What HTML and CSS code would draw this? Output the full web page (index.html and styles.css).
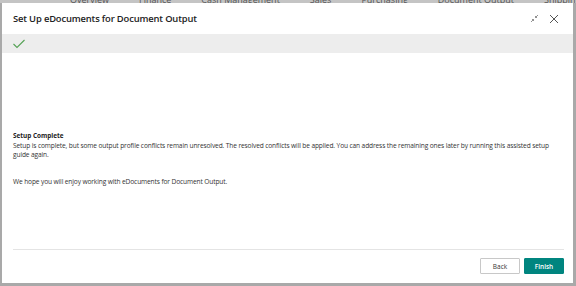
FILE: index.html
```html
<!DOCTYPE html>
<html>
<head>
<meta charset="utf-8">
<link rel="stylesheet" href="styles.css">
</head>
<body>
<div class="backdrop">
  <div class="tabs"><span>Overview</span><span>Finance</span><span>Cash Management</span><span>Sales</span><span>Purchasing</span><span>Document Output</span><span>Shipping</span><span>All reports</span></div>
</div>
<div class="dialog">
  <div class="header">
    <h1 class="title">Set Up eDocuments for Document Output</h1>
    <div class="actions">
      <svg class="icon" width="9" height="9" viewBox="0 0 9 9"><path d="M1 8L3.5 5.5M2 5.5h1.5V7M8 1L5.5 3.5M7 3.5H5.5V2" stroke="#777" stroke-width="0.8" fill="none"/></svg>
      <svg class="icon" width="10" height="10" viewBox="0 0 10 10"><path d="M1 1L9 9M9 1L1 9" stroke="#555" stroke-width="1" fill="none"/></svg>
    </div>
  </div>
  <div class="steps">
    <svg width="12" height="10" viewBox="0 0 12 10"><path d="M0.5 5L4 8.5L11.5 1" stroke="#55a255" stroke-width="1.1" fill="none"/></svg>
  </div>
  <div class="content">
    <h2 class="subtitle">Setup Complete</h2>
    <p class="text">Setup is complete, but some output profile conflicts remain unresolved. The resolved conflicts will be applied. You can address the remaining ones later by running this assisted setup guide again.</p>
    <p class="text hope">We hope you will enjoy working with eDocuments for Document Output.</p>
  </div>
  <div class="footer">
    <button class="btn back">Back</button>
    <button class="btn finish">Finish</button>
  </div>
</div>
</body>
</html>
```
FILE: styles.css
```css
* { box-sizing: border-box; }
html, body { margin: 0; padding: 0; }
body {
  width: 576px;
  height: 286px;
  overflow: hidden;
  background: #a9a9a9;
  font-family: "Open Sans", "Liberation Sans", sans-serif;
  color: #222;
  display: flex;
  flex-direction: column;
}
.backdrop {
  height: 3px;
  overflow: hidden;
  background: #c4c4c4;
  padding-left: 70px;
}
.tabs {
  display: flex;
  gap: 30px;
  margin-top: -7px;
  font-size: 9px;
  color: #555;
  white-space: nowrap;
}
.dialog {
  flex: 1;
  margin: 0 3px 3px 2px;
  background: #fff;
  display: flex;
  flex-direction: column;
}
.header {
  height: 31px;
  display: flex;
  align-items: center;
  justify-content: space-between;
  padding: 0 14px 0 11px;
}
.title {
  margin: 0;
  font-size: 9.4px;
  letter-spacing: -0.15px;
  font-weight: 600;
  color: #222;
}
.actions {
  display: flex;
  align-items: center;
  gap: 10px;
}
.icon { display: block; }
.steps {
  height: 19px;
  background: #ededed;
  display: flex;
  align-items: center;
  padding-left: 11px;
}
.steps svg { display: block; }
.content {
  flex: 1;
  padding: 78px 13px 0 11px;
}
.subtitle {
  margin: 0 0 1px;
  font-size: 6.4px;
  font-weight: 700;
  color: #222;
}
.text {
  margin: 0;
  font-size: 6.6px;
  letter-spacing: -0.12px;
  line-height: 9px;
  color: #333;
}
.hope { margin-top: 18px; }
.footer {
  margin: 0 9px 0 11px;
  border-top: 1px solid #e4e4e4;
  display: flex;
  justify-content: flex-end;
  gap: 4px;
  padding: 8px 0 9px;
}
.btn {
  width: 40px;
  height: 16px;
  font-family: inherit;
  font-size: 6.5px;
  padding: 0;
  border-radius: 1px;
}
.back {
  background: #fff;
  border: 1px solid #c8c8c8;
  color: #333;
}
.finish {
  background: #00857f;
  border: 1px solid #00857f;
  color: #fff;
  font-weight: 600;
}
```
